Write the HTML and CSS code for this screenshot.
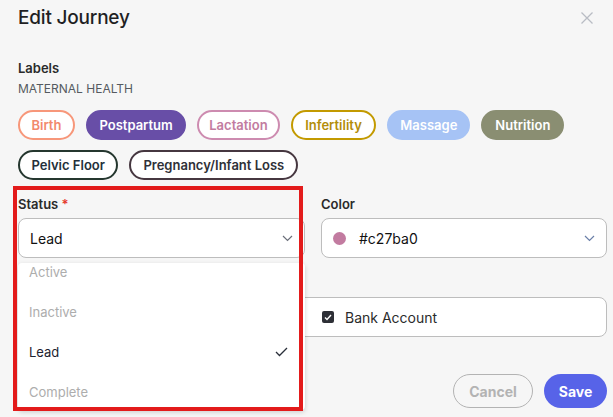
FILE: index.html
```html
<!DOCTYPE html>
<html>
<head>
<meta charset="utf-8">
<link rel="stylesheet" href="styles.css">
</head>
<body>
<div class="modal">
  <header class="header">
    <h1 class="title">Edit Journey</h1>
    <svg class="close" width="14" height="14" viewBox="0 0 14 14"><path d="M1.5 1.5 L12.5 12.5 M12.5 1.5 L1.5 12.5" stroke="#b9bcc4" stroke-width="1.3" fill="none"/></svg>
  </header>

  <section class="labels">
    <div class="field-label">Labels</div>
    <div class="group-name">MATERNAL HEALTH</div>
    <div class="chips">
      <span class="chip chip-birth">Birth</span>
      <span class="chip chip-postpartum">Postpartum</span>
      <span class="chip chip-lactation">Lactation</span>
      <span class="chip chip-infertility">Infertility</span>
      <span class="chip chip-massage">Massage</span>
      <span class="chip chip-nutrition">Nutrition</span>
      <span class="chip chip-pelvic">Pelvic Floor</span>
      <span class="chip chip-loss">Pregnancy/Infant Loss</span>
    </div>
  </section>

  <section class="fields">
    <div class="field">
      <div class="field-label">Status <span class="req">*</span></div>
      <div class="select">
        <span class="select-value">Lead</span>
        <svg class="chev" width="11" height="7" viewBox="0 0 11 7"><path d="M1 1 L5.5 5.5 L10 1" stroke="#6b6f7a" stroke-width="1.2" fill="none"/></svg>
      </div>
      <div class="menu">
        <div class="menu-list">
          <div class="opt opt-disabled">Active</div>
          <div class="opt opt-disabled">Inactive</div>
          <div class="opt opt-selected">Lead
            <svg width="13" height="10" viewBox="0 0 13 10"><path d="M1 5 L4.5 8.5 L12 1" stroke="#2a2f3a" stroke-width="1.3" fill="none"/></svg>
          </div>
          <div class="opt opt-disabled">Complete</div>
        </div>
      </div>
    </div>
    <div class="field">
      <div class="field-label">Color</div>
      <div class="select">
        <span class="swatch"></span>
        <span class="select-value">#c27ba0</span>
        <svg class="chev" width="11" height="7" viewBox="0 0 11 7"><path d="M1 1 L5.5 5.5 L10 1" stroke="#6a7fa8" stroke-width="1.2" fill="none"/></svg>
      </div>
    </div>
  </section>

  <section class="checks">
    <div class="check-cell"></div>
    <div class="check-cell">
      <span class="checkbox"><svg width="8" height="7" viewBox="0 0 8 7"><path d="M1 3.5 L3 5.5 L7 1" stroke="#fff" stroke-width="1.4" fill="none"/></svg></span>
      <span class="check-text">Bank Account</span>
    </div>
  </section>

  <footer class="actions">
    <button class="btn btn-cancel">Cancel</button>
    <button class="btn btn-save">Save</button>
  </footer>

  <div class="highlight"></div>
</div>
</body>
</html>
```

FILE: styles.css
```css
* { box-sizing: border-box; }
html, body { margin: 0; padding: 0; }
body {
  width: 613px;
  height: 417px;
  overflow: hidden;
  background: #f6f6f6;
  font-family: Inter, "Noto Sans", Arial, sans-serif;
  color: #222;
}
.modal {
  position: relative;
  padding: 6px 6px 0 18px;
  height: 417px;
}
.header {
  display: flex;
  align-items: center;
  justify-content: space-between;
  height: 24px;
  padding-right: 13px;
}
.title {
  margin: 0;
  font-size: 19px;
  font-weight: 500;
  line-height: 24px;
  color: #1f1f24;
  letter-spacing: -0.2px;
}
.close { display: block; }

.labels { margin-top: 30px; }
.field-label {
  font-size: 13px;
  font-weight: 600;
  line-height: 16px;
  color: #2a2a2a;
}
.req { color: #e5372b; }
.group-name {
  margin-top: 6px;
  font-size: 12px;
  line-height: 14px;
  color: #555a60;
}
.chips {
  display: flex;
  flex-wrap: wrap;
  gap: 10px 11px;
  margin-top: 14px;
  width: 570px;
}
.chip {
  display: inline-flex;
  align-items: center;
  height: 30px;
  padding: 0 11.5px;
  border-radius: 15px;
  border: 2px solid transparent;
  font-size: 13px;
  font-weight: 600;
  background: #fff;
}
.chip-birth { border-color: #f7977a; color: #f28a6d; padding: 0 11.5px; }
.chip-postpartum { background: #684ea7; border-color: #684ea7; color: #fff; padding: 0 11.5px; }
.chip-lactation { border-color: #cd8bb0; color: #c27ba0; padding: 0 10px; }
.chip-infertility { border-color: #c39a00; color: #b38d0a; padding: 0 12.5px; }
.chip-massage { background: #a6c3f5; border-color: #a6c3f5; color: #fff; padding: 0 11px; }
.chip-nutrition { background: #8a8e72; border-color: #8a8e72; color: #fff; padding: 0 12px; }
.chip-pelvic { border-color: #25372f; color: #24303a; padding: 0 11.5px; }
.chip-loss { border-color: #463740; color: #2f3038; padding: 0 12px; }

.fields {
  display: grid;
  grid-template-columns: 287px 286px;
  gap: 16px;
  margin-top: 16px;
}
.field { position: relative; }
.select {
  display: flex;
  align-items: center;
  margin-top: 6px;
  height: 40px;
  padding: 0 11px;
  background: #fff;
  border: 1px solid #bdbdbd;
  border-radius: 8px;
}
.select-value {
  flex: 1;
  font-size: 14px;
  color: #111;
}
.swatch {
  width: 13px;
  height: 13px;
  border-radius: 50%;
  background: #c27ba0;
  margin-right: 13px;
}

.menu {
  position: absolute;
  z-index: 2;
  left: 0;
  top: 67px;
  width: 287px;
  height: 147px;
  overflow: hidden;
  background: #fff;
  border-radius: 4px;
  box-shadow: 0 2px 5px rgba(0,0,0,0.18);
}
.menu-list { margin-top: -11px; }
.opt {
  display: flex;
  align-items: center;
  justify-content: space-between;
  height: 40px;
  padding: 0 17px 0 11px;
  font-size: 13px;
}
.opt-disabled { color: #adadad; }
.opt-selected { color: #1e2330; }

.checks {
  display: grid;
  grid-template-columns: 303px 1fr;
  margin-top: 39px;
  height: 40px;
  background: #fff;
  border: 1px solid #bdbdbd;
  border-radius: 8px;
}
.check-cell {
  display: flex;
  align-items: center;
}
.checkbox {
  display: inline-flex;
  align-items: center;
  justify-content: center;
  width: 12px;
  height: 12px;
  border-radius: 2px;
  background: #2d2f36;
  margin-right: 11px;
}
.check-text { font-size: 14px; color: #2b2b2b; }

.actions {
  display: flex;
  justify-content: flex-end;
  gap: 11px;
  margin-top: 37px;
}
.btn {
  height: 34px;
  border-radius: 17px;
  font-family: inherit;
  font-size: 14px;
  font-weight: 700;
  padding: 0;
}
.btn-cancel {
  width: 80px;
  background: transparent;
  border: 1px solid #b3b3b3;
  color: #b3b3b3;
}
.btn-save {
  width: 63px;
  background: #5763e8;
  border: none;
  color: #fff;
}

.highlight {
  position: absolute;
  z-index: 3;
  left: 13px;
  top: 186px;
  width: 290px;
  height: 225px;
  border: 4px solid #e31b1b;
  pointer-events: none;
}
```
